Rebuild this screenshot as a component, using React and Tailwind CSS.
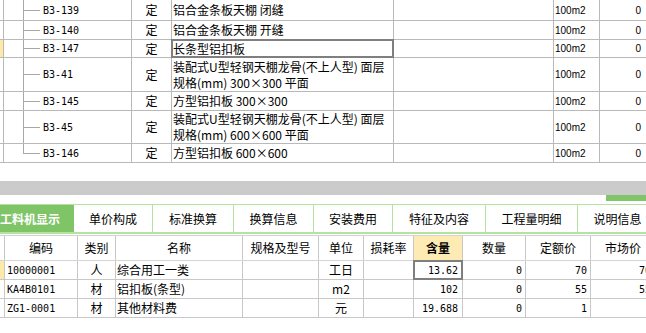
import React from "react";

const CJK = "font-['Noto_Sans_CJK_SC','Liberation_Sans',sans-serif]";
const MONO = "font-['DejaVu_Sans_Mono','Noto_Sans_CJK_SC',monospace]";

const topRows = [
  { code: "B3-139", name: ["铝合金条板天棚 闭缝"], h: "h-[21px]" },
  { code: "B3-140", name: ["铝合金条板天棚 开缝"], h: "h-[19px]" },
  { code: "B3-147", name: ["长条型铝扣板"], h: "h-[18px]", sel: true, mark: true },
  { code: "B3-41", name: ["装配式U型轻钢天棚龙骨(不上人型) 面层", "规格(mm) 300×300 平面"], h: "h-[34px]" },
  { code: "B3-145", name: ["方型铝扣板 300×300"], h: "h-[19px]" },
  { code: "B3-45", name: ["装配式U型轻钢天棚龙骨(不上人型) 面层", "规格(mm) 600×600 平面"], h: "h-[33px]" },
  { code: "B3-146", name: ["方型铝扣板 600×600"], h: "h-[19px]", last: true },
];

const tabs = [
  { label: "单价构成", w: "w-[79px]" },
  { label: "标准换算", w: "w-[81px]" },
  { label: "换算信息", w: "w-[80px]" },
  { label: "安装费用", w: "w-[79px]" },
  { label: "特征及内容", w: "w-[93px]" },
  { label: "工程量明细", w: "w-[92px]" },
  { label: "说明信息", w: "w-[80px]" },
];

const cols = [
  { key: "ind", w: "w-[5px]", label: "" },
  { key: "code", w: "w-[73px]", label: "编码" },
  { key: "type", w: "w-[38px]", label: "类别" },
  { key: "name", w: "w-[127px]", label: "名称" },
  { key: "spec", w: "w-[76px]", label: "规格及型号" },
  { key: "unit", w: "w-[45px]", label: "单位" },
  { key: "loss", w: "w-[50px]", label: "损耗率" },
  { key: "qty", w: "w-[49px]", label: "含量" },
  { key: "num", w: "w-[63px]", label: "数量" },
  { key: "price", w: "w-[65px]", label: "定额价" },
  { key: "market", w: "w-[65px]", label: "市场价" },
];

const items = [
  { code: "10000001", type: "人", name: "综合用工一类", unit: "工日", qty: "13.62", num: "0", price: "70", market: "70", mark: true },
  { code: "KA4B0101", type: "材", name: "铝扣板(条型)", unit: "m2", qty: "102", num: "0", price: "55", market: "55" },
  { code: "ZG1-0001", type: "材", name: "其他材料费", unit: "元", qty: "19.688", num: "0", price: "1", market: "" },
];

function TopRow({ r }) {
  return (
    <div className={`flex ${r.h} border-b border-[#b9b9b9] text-[12px] text-black`}>
      <div className={`w-[4px] border-r border-[#b9b9b9] ${r.mark ? "bg-[#fde9a8]" : ""}`} />
      <div className="w-[128px] border-r border-[#b9b9b9] flex items-stretch">
        <div className="w-[19px]" />
        <div className="flex flex-col w-[17px]">
          <div className="flex-1 border-l border-b border-[#a8a8a8]" />
          <div className={`flex-1 ${r.last ? "" : "border-l border-[#a8a8a8]"}`} />
        </div>
        <div className={`ml-[3px] flex items-center ${MONO} text-[10px]`}>{r.code}</div>
      </div>
      <div className={`w-[40px] border-r border-[#b9b9b9] flex items-center justify-center ${CJK}`}>定</div>
      <div className={`relative w-[222px] border-r border-[#b9b9b9] flex flex-col justify-center pl-[1px] leading-[16px] ${CJK}`}>
        {r.name.map((t) => (
          <div key={t} className="whitespace-nowrap">{t}</div>
        ))}
        {r.sel && <div className="absolute -left-[1px] -top-[1px] -right-[1px] -bottom-[1px] border-2 border-[#7f7f7f]" />}
      </div>
      <div className="w-[160px] border-r border-[#b9b9b9]" />
      <div className="w-[46px] border-r border-[#b9b9b9] flex items-center pl-[1px] font-['Liberation_Sans',sans-serif] text-[10px]">100m2</div>
      <div className="flex-1 flex items-center justify-end pr-[5px] font-['Liberation_Sans',sans-serif] text-[10px]">0</div>
    </div>
  );
}

export default function App() {
  return (
    <div className={`w-[646px] h-[333px] overflow-hidden bg-white ${CJK}`}>
      {topRows.map((r) => (
        <TopRow key={r.code} r={r} />
      ))}
      <div className="h-[18px]" />
      <div className="h-[14px] bg-[#cbcbcb]" />
      <div className="h-[9px] flex justify-end">
        <div className="w-[40px] h-[6px] bg-[#82c46a]" />
      </div>

      <div className="flex h-[30px] border-t border-b-2 border-[#b4e3a0] text-[12px]">
        <div className="w-[75px] bg-[#7fc466] text-white font-bold flex items-center justify-end pr-[14px] whitespace-nowrap">
          工料机显示
        </div>
        {tabs.map((t) => (
          <div key={t.label} className={`${t.w} shrink-0 border-r border-[#b4e3a0] flex items-center justify-center text-black whitespace-nowrap`}>
            {t.label}
          </div>
        ))}
      </div>

      <div className="mt-[1px] flex h-[26px] border-t border-b border-[#d4d4d4] text-[12px] w-[660px]">
        {cols.map((c) => (
          <div
            key={c.key}
            className={`${c.w} shrink-0 border-r border-[#c8c8c8] flex items-center justify-center whitespace-nowrap ${
              c.key === "qty" ? "bg-[#fdebb3] font-bold" : ""
            }`}
          >
            {c.label}
          </div>
        ))}
      </div>

      {items.map((it, i) => (
        <div key={it.code} className="flex h-[19px] border-b border-[#c8c8c8] text-[12px] w-[660px]">
          <div className={`w-[5px] shrink-0 border-r border-[#c8c8c8] ${it.mark ? "bg-[#fde9a8]" : ""}`} />
          <div className={`w-[73px] shrink-0 border-r border-[#c8c8c8] flex items-center pl-[2px] ${MONO} text-[10px]`}>{it.code}</div>
          <div className="w-[38px] shrink-0 border-r border-[#c8c8c8] flex items-center justify-center">{it.type}</div>
          <div className="w-[127px] shrink-0 border-r border-[#c8c8c8] flex items-center pl-[1px] whitespace-nowrap">{it.name}</div>
          <div className="w-[76px] shrink-0 border-r border-[#c8c8c8]" />
          <div className="w-[45px] shrink-0 border-r border-[#c8c8c8] flex items-center justify-center">{it.unit}</div>
          <div className="w-[50px] shrink-0 border-r border-[#c8c8c8]" />
          <div className={`relative w-[49px] shrink-0 border-r border-[#c8c8c8] flex items-center justify-end pr-[4px] ${MONO} text-[10px]`}>
            {it.qty}
            {i === 0 && <div className="absolute -left-[1px] -top-[1px] -right-[1px] -bottom-[1px] border-2 border-[#7f7f7f]" />}
          </div>
          <div className={`w-[63px] shrink-0 border-r border-[#c8c8c8] flex items-center justify-end pr-[3px] ${MONO} text-[10px]`}>{it.num}</div>
          <div className={`w-[65px] shrink-0 border-r border-[#c8c8c8] flex items-center justify-end pr-[3px] ${MONO} text-[10px]`}>{it.price}</div>
          <div className={`w-[65px] shrink-0 border-r border-[#c8c8c8] flex items-center justify-end pr-[4px] ${MONO} text-[10px]`}>{it.market}</div>
        </div>
      ))}
    </div>
  );
}
